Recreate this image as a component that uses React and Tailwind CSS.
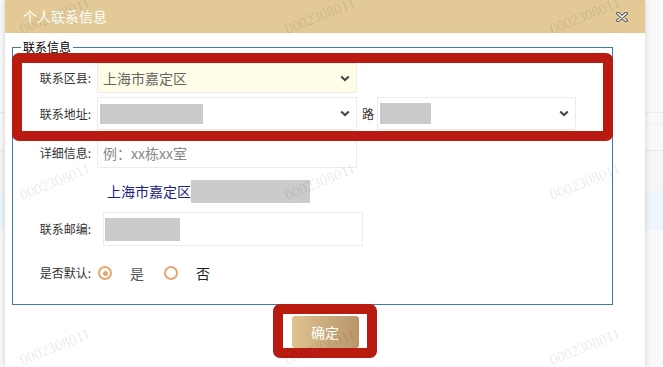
const font = "font-['Noto_Sans_CJK_SC','Liberation_Sans',sans-serif]"

const Chevron = () => (
  <svg width="10" height="7" viewBox="0 0 10 7" className="shrink-0">
    <path d="M1.2 1.5l3.8 3.6 3.8-3.6" fill="none" stroke="#444" strokeWidth="2" />
  </svg>
)

const Redacted = ({ className }) => <div className={`bg-[#cbcbcb] ${className}`} />

const Label = ({ children }) => (
  <div className="w-[78px] shrink-0 text-right text-[12px] text-[#333]">{children}</div>
)

const Radio = ({ checked }) => (
  <span className="flex h-[14px] w-[14px] items-center justify-center rounded-full border-2 border-[#e9a66c]">
    {checked && <span className="h-[5px] w-[5px] rounded-full bg-[#e9a66c]" />}
  </span>
)

const marks = [
  [55, 16], [320, 16], [585, 16],
  [55, 182], [320, 182], [585, 182],
  [55, 347], [320, 347], [585, 347],
]

export default function App() {
  return (
    <div className={`relative h-[367px] w-[663px] overflow-hidden bg-[#f9f9f9] ${font}`}>
      {/* page behind the dialog */}
      <div className="flex flex-col">
        <div className="h-[112px]" />
        <div className="h-px bg-[#e6edf2]" />
        <div className="h-[10px]" />
        <div className="h-px bg-[#eef2f5]" />
        <div className="h-[26px]" />
        <div className="h-[41px] border-t border-[#eaeaea] bg-[#f6f6f6]" />
        <div className="h-[39px] bg-[#eef5fb]" />
      </div>

      <div className="absolute left-[5px] top-0 h-[367px] w-[640px] bg-white shadow-[0_0_6px_rgba(0,0,0,0.18)]">
        <div className="flex h-[33px] items-center justify-between bg-[#e2c995] pl-[18px] pr-[17px]">
          <span className="text-[14px] text-white">个人联系信息</span>
          <svg width="12" height="10" viewBox="0 0 12 10">
            <path d="M2 1.5l8 7M10 1.5l-8 7" stroke="#555" strokeWidth="3.6" strokeLinecap="round" />
            <path d="M2 1.5l8 7M10 1.5l-8 7" stroke="#fff" strokeWidth="1.6" strokeLinecap="round" />
          </svg>
        </div>

        <div className="relative ml-[7px] mt-[14px] flex w-[601px] flex-col border border-[#3f79a6] pb-[22px] pt-[15px]">
          <span className="absolute -top-[9px] left-[8px] bg-white px-[2px] text-[12px] leading-[16px] text-black">
            联系信息
          </span>

          <div className="flex h-[30px] items-center">
            <Label>联系区县:</Label>
            <div className="ml-[6px] flex h-[30px] w-[260px] items-center justify-between border border-[#ececec] bg-[#fffde7] pl-[5px] pr-[6px] text-[14px] text-[#666]">
              上海市嘉定区
              <Chevron />
            </div>
          </div>

          <div className="mt-[4px] flex h-[33px] items-center">
            <Label>联系地址:</Label>
            <div className="ml-[6px] flex h-[33px] w-[260px] items-center justify-between border border-[#ececec] pl-[2px] pr-[6px]">
              <Redacted className="h-[20px] w-[103px]" />
              <Chevron />
            </div>
            <span className="ml-[5px] text-[12px] text-[#333]">路</span>
            <div className="ml-[3px] flex h-[33px] w-[199px] items-center justify-between border border-[#ececec] pl-[2px] pr-[6px]">
              <Redacted className="h-[21px] w-[51px]" />
              <Chevron />
            </div>
          </div>

          <div className="mt-[8px] flex h-[30px] items-center">
            <Label>详细信息:</Label>
            <div className="ml-[6px] flex h-[30px] w-[260px] items-center border border-[#ececec] pl-[5px] text-[14px] text-[#888]">
              例：xx栋xx室
            </div>
          </div>

          <div className="mt-[12px] flex h-[23px] items-center pl-[94px] text-[14px] text-[#1c2384]">
            上海市嘉定区
            <Redacted className="h-[23px] w-[119px]" />
          </div>

          <div className="mt-[9px] flex h-[34px] items-center">
            <Label>联系邮编:</Label>
            <div className="ml-[12px] flex h-[34px] w-[260px] items-center border border-[#ececec] pl-px">
              <Redacted className="h-[23px] w-[75px]" />
            </div>
          </div>

          <div className="mt-[18px] flex h-[18px] items-center text-[12px] text-[#333]">
            <Label>是否默认:</Label>
            <span className="ml-[7px]"><Radio checked /></span>
            <span className="ml-[18px] text-[14px] text-[#555]">是</span>
            <span className="ml-[20px]"><Radio /></span>
            <span className="ml-[18px] text-[14px] text-[#222]">否</span>
          </div>
        </div>

        <div className="mt-[11px] flex justify-center">
          <button className="h-[32px] w-[67px] rounded-[3px] bg-linear-to-r from-[#ddc38f] to-[#b8956b] text-[14px] text-white">
            确定
          </button>
        </div>

        <div className="absolute left-[7px] top-[53px] h-[88px] w-[601px] rounded-[7px] border-[10px] border-[#b91b10]" />
        <div className="absolute left-[268px] top-[304px] h-[54px] w-[104px] rounded-[7px] border-[10px] border-[#b91b10]" />
      </div>

      {marks.map(([x, y]) => (
        <span
          key={`${x}-${y}`}
          className="pointer-events-none absolute -translate-x-1/2 -translate-y-1/2 -rotate-[22deg] font-['Liberation_Serif',serif] text-[15px] text-black/10"
          style={{ left: x, top: y }}
        >
          0002308011
        </span>
      ))}
    </div>
  )
}
